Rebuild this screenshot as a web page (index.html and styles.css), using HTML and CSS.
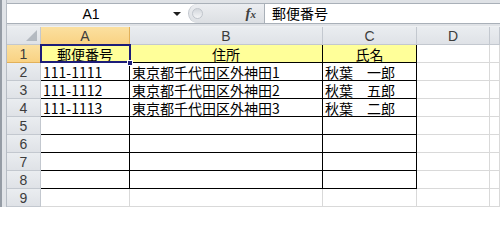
FILE: index.html
```html
<!DOCTYPE html>
<html lang="ja">
<head>
<meta charset="utf-8">
<link rel="stylesheet" href="styles.css">
</head>
<body>
<div class="window">
  <div class="frame-left"></div>
  <div class="main">
    <div class="fbar">
      <div class="fbar-inner">
        <div class="namebox"><span class="nb-text">A1</span><span class="nb-arrow"></span></div>
        <div class="mid"><span class="knob"></span><span class="fx"><i>f</i><span class="x">x</span></span></div>
        <div class="formula">郵便番号</div>
      </div>
    </div>
    <div class="sheet">
      <div class="hd corner"><span class="tri"></span></div>
      <div class="hd col sel">A</div>
      <div class="hd col">B</div>
      <div class="hd col">C</div>
      <div class="hd col">D</div>
      <div class="hd col last"></div>

      <div class="hd row sel">1</div>
      <div class="c d y center active">郵便番号<span class="selbox"></span><span class="handle"></span></div>
      <div class="c d y center">住所</div>
      <div class="c d y center">氏名</div>
      <div class="c"></div><div class="c"></div>

      <div class="hd row">2</div>
      <div class="c d">111-1111</div>
      <div class="c d">東京都千代田区外神田1</div>
      <div class="c d">秋葉　一郎</div>
      <div class="c"></div><div class="c"></div>

      <div class="hd row">3</div>
      <div class="c d">111-1112</div>
      <div class="c d">東京都千代田区外神田2</div>
      <div class="c d">秋葉　五郎</div>
      <div class="c"></div><div class="c"></div>

      <div class="hd row">4</div>
      <div class="c d">111-1113</div>
      <div class="c d">東京都千代田区外神田3</div>
      <div class="c d">秋葉　二郎</div>
      <div class="c"></div><div class="c"></div>

      <div class="hd row">5</div>
      <div class="c d"></div><div class="c d"></div><div class="c d"></div>
      <div class="c"></div><div class="c"></div>

      <div class="hd row">6</div>
      <div class="c d"></div><div class="c d"></div><div class="c d"></div>
      <div class="c"></div><div class="c"></div>

      <div class="hd row">7</div>
      <div class="c d"></div><div class="c d"></div><div class="c d"></div>
      <div class="c"></div><div class="c"></div>

      <div class="hd row">8</div>
      <div class="c d"></div><div class="c d"></div><div class="c d"></div>
      <div class="c"></div><div class="c"></div>

      <div class="hd row">9</div>
      <div class="c"></div><div class="c"></div><div class="c"></div>
      <div class="c"></div><div class="c"></div>
    </div>
  </div>
</div>
</body>
</html>
```

FILE: styles.css
```css
* { box-sizing: border-box; }
html, body { margin: 0; padding: 0; }
html { background: #ffffff; }
body {
  width: 500px;
  background: #ffffff;
  font-family: "Noto Sans CJK JP", "Noto Sans", sans-serif;
  font-size: 14px;
  color: #000;
}
.window {
  display: flex;
  width: 500px;
}
.frame-left {
  width: 7px;
  flex: none;
  background: #e1e4e8;
  border-left: 2px solid #959ca5;
  border-right: 1px solid #b6bcc4;
}
.main {
  width: 493px;
  flex: none;
  display: flex;
  flex-direction: column;
}
.fbar {
  height: 27px;
  flex: none;
  background: #dfe2e6;
  padding-top: 3px;
  border-bottom: 1px solid #eef0f2;
}
.fbar-inner {
  height: 21px;
  display: flex;
  border-top: 1px solid #a9b0b8;
  border-bottom: 1px solid #a9b0b8;
  background: #ffffff;
}
.namebox {
  width: 181px;
  flex: none;
  display: flex;
  align-items: center;
}
.nb-text {
  flex: 1;
  text-align: center;
  padding-left: 2px;
  font-family: "Liberation Sans", Arial, sans-serif;
  font-size: 14px;
  line-height: 16px;
}
.nb-arrow {
  width: 0;
  height: 0;
  border-left: 4px solid transparent;
  border-right: 4px solid transparent;
  border-top: 4px solid #1e1e1e;
  margin-right: 7px;
}
.mid {
  width: 76px;
  flex: none;
  display: flex;
  align-items: center;
  justify-content: space-between;
  background: linear-gradient(#eceef1, #dcdfe3);
  border-left: 1px solid #c2c7ce;
  border-radius: 10px 0 0 10px;
  padding: 0 8px 0 3px;
}
.knob {
  width: 11px;
  height: 11px;
  border-radius: 50%;
  background: linear-gradient(#d3d7dc, #f4f5f7);
  border: 1px solid #c0c5cc;
}
.fx {
  font-family: "Liberation Serif", "DejaVu Serif", serif;
  font-size: 15px;
  color: #3f3f3f;
  font-weight: bold;
  line-height: 16px;
}
.fx i { font-style: italic; }
.fx .x { font-size: 11px; font-style: italic; }
.formula {
  flex: 1;
  border-left: 1px solid #a9b0b8;
  padding-left: 7px;
  line-height: 19px;
}
.sheet {
  display: grid;
  grid-template-columns: 34px 89px 193px 94px 73px 10px;
  grid-auto-rows: 18px;
}
.hd {
  background: linear-gradient(#eaedf0, #dfe2e7);
  border-right: 1px solid #c3c8cf;
  border-bottom: 1px solid #c3c8cf;
  color: #3c3c3c;
  display: flex;
  align-items: center;
  justify-content: center;
  font-family: "Liberation Sans", Arial, sans-serif;
  font-size: 14px;
  line-height: 16px;
  padding-top: 1px;
}
.hd.sel {
  background: linear-gradient(#fbe0a0, #f9d283);
  border-right-color: #e2b15a;
  border-bottom-color: #e2b15a;
}
.hd.col.sel { border-bottom: 1px solid #d99a2b; }
.hd.row.sel { border-right: 1px solid #d99a2b; }
.corner {
  justify-content: flex-end;
  align-items: flex-end;
  padding: 0 3px 3px 0;
}
.tri {
  width: 11px;
  height: 11px;
  background: #b4bac1;
  clip-path: polygon(100% 0, 100% 100%, 0 100%);
}
.c {
  border-right: 1px solid #d9d9d9;
  border-bottom: 1px solid #d9d9d9;
  padding-left: 2px;
  padding-top: 1px;
  line-height: 16px;
  white-space: nowrap;
}
.c.d {
  border-right-color: #000;
  border-bottom-color: #000;
}
.c.y { background: #ffff99; }
.c.center { text-align: center; padding-left: 0; }
.active {
  position: relative;
}
.selbox {
  position: absolute;
  left: -1px;
  top: -1px;
  right: -2px;
  bottom: -1px;
  border: 2px solid #1c1c78;
  pointer-events: none;
}
.handle {
  position: absolute;
  right: -4px;
  bottom: -4px;
  width: 6px;
  height: 6px;
  background: #1c1c78;
  border: 1px solid #ffffff;
  z-index: 2;
}
```
